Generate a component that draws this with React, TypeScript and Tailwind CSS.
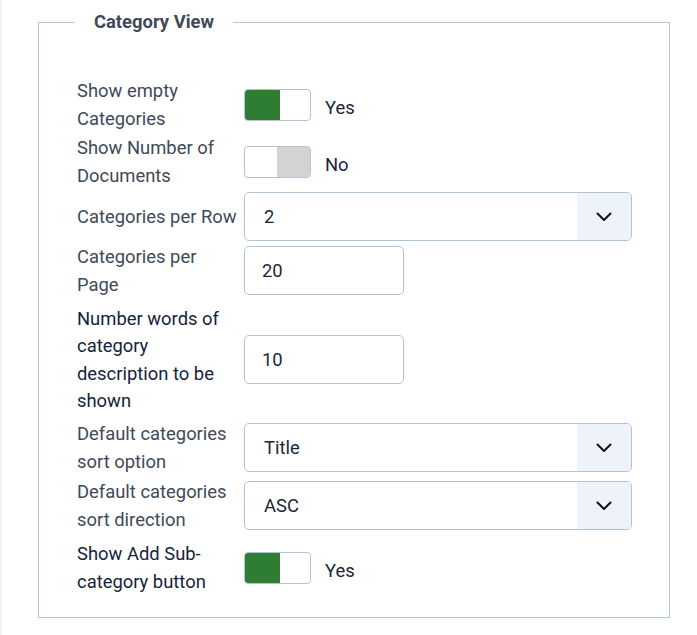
import React from "react";

const gray = "text-[#3f4a58]";
const navy = "text-[#16233a]";

function Switch({ on, label }: { on: boolean; label: string }) {
  return (
    <div className="flex items-center">
      <div className="flex h-[32px] w-[67px] overflow-hidden rounded-[4px] border border-[#b3c3d6] bg-white">
        {on ? (
          <>
            <div className="h-full w-[35px] bg-[#2e7d32]" />
            <div className="flex-1" />
          </>
        ) : (
          <>
            <div className="w-[32px]" />
            <div className="h-full flex-1 bg-[#d3d3d3]" />
          </>
        )}
      </div>
      <span className="ml-[14px] pt-[6px] text-[#1c2636]">{label}</span>
    </div>
  );
}

function Select({ value }: { value: string }) {
  return (
    <div className="flex h-[49px] w-[388px] overflow-hidden rounded-[5px] border border-[#b3c3d6] bg-white">
      <div className="flex flex-1 items-center pl-[19px] text-[#1c2636]">{value}</div>
      <div className="flex w-[54px] items-center justify-center bg-[#eef3fa]">
        <svg width="16" height="10" viewBox="0 0 16 10" fill="none">
          <path d="M1.5 1.5 L8 8 L14.5 1.5" stroke="#111" strokeWidth="2" strokeLinecap="round" strokeLinejoin="round" />
        </svg>
      </div>
    </div>
  );
}

function Input({ value }: { value: string }) {
  return (
    <div className="flex h-[49px] w-[160px] items-center rounded-[5px] border border-[#b3c3d6] bg-white pl-[17px] text-[#1c2636]">
      {value}
    </div>
  );
}

function Row({
  label,
  dark,
  children,
  mt,
}: {
  label: React.ReactNode;
  dark?: boolean;
  children: React.ReactNode;
  mt: string;
}) {
  return (
    <div className={`flex items-center ${mt}`}>
      <div className={`w-[167px] shrink-0 pr-[4px] ${dark ? navy : gray}`}>{label}</div>
      <div>{children}</div>
    </div>
  );
}

export default function App() {
  return (
    <div
      className="min-h-[635px] border-l-2 border-[#eef2f7] bg-white pt-[8px]"
      style={{ fontFamily: "Roboto, 'Liberation Sans', sans-serif" }}
    >
      <fieldset className="ml-[36px] w-[632px] border border-[#b8c6dc] pb-[21px] pl-[38px] pt-[41px] text-[18.4px] leading-[27.6px]">
        <legend className="ml-[-2px] px-[19px] text-[18.4px] font-bold leading-[28px] text-[#3f4a58]">
          Category View
        </legend>
        <Row label={<>Show empty<br />Categories</>} mt="mt-0">
          <Switch on label="Yes" />
        </Row>
        <Row label={<>Show Number of<br />Documents</>} mt="mt-[2px]">
          <Switch on={false} label="No" />
        </Row>
        <Row label="Categories per Row" mt="mt-[3px]">
          <Select value="2" />
        </Row>
        <Row label={<>Categories per<br />Page</>} mt="mt-[2px]">
          <Input value="20" />
        </Row>
        <Row
          dark
          label={<>Number words of<br />category<br />description to be<br />shown</>}
          mt="mt-[6px]"
        >
          <Input value="10" />
        </Row>
        <Row label={<>Default categories<br />sort option</>} mt="mt-[5px]">
          <Select value="Title" />
        </Row>
        <Row label={<>Default categories<br />sort direction</>} mt="mt-[3px]">
          <Select value="ASC" />
        </Row>
        <Row dark label={<>Show Add Sub-<br />category button</>} mt="mt-[7px]">
          <Switch on label="Yes" />
        </Row>
      </fieldset>
    </div>
  );
}
